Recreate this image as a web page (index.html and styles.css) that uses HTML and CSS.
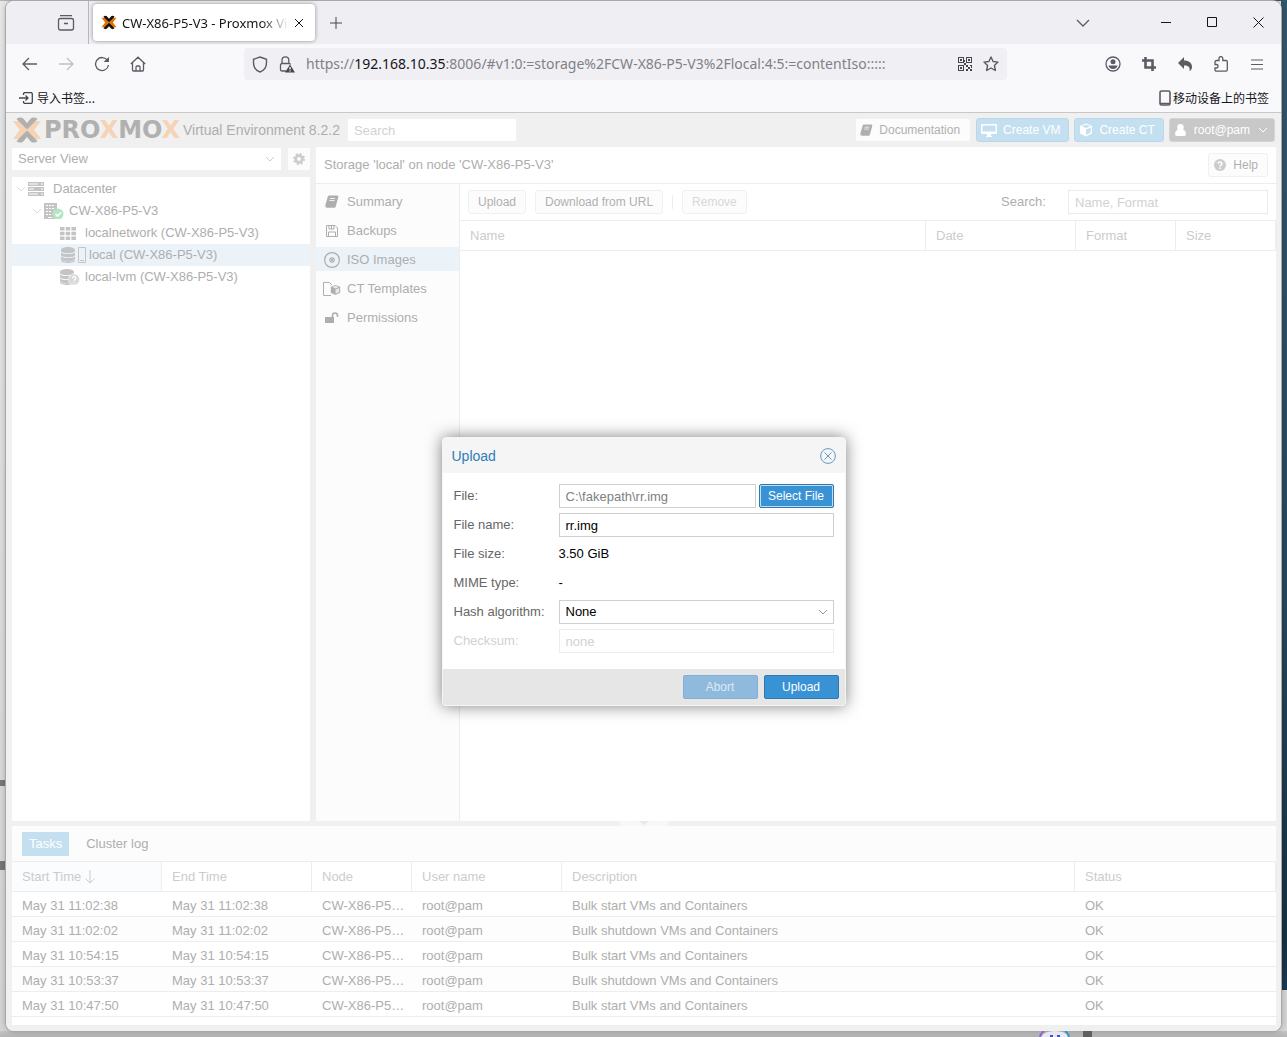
FILE: index.html
```
<!DOCTYPE html>
<html lang="en">

<head>
    <meta charset="UTF-8">
    <meta name="viewport" content="width=device-width, initial-scale=1.0">
    <title>CW-X86-P5-V3 - Proxmox Virtual Environment</title>
    <link rel="stylesheet" href="styles.css">
</head>

<body>
    <svg class="defs" width="0" height="0">
        <symbol id="mark" viewBox="0 0 30 26">
            <path class="mark-side" d="M1 4h6c1 0 2 .5 2.600 1.200L15.500 13l-5.900 7.800C9 21.500 8 22 7 22H1l6.800-9zM29 4h-6c-1 0-2 .5-2.600 1.200L14.500 13l5.900 7.800C21 21.500 22 22 23 22h6l-6.800-9z" />
            <path class="mark-top" d="M4.500 2C5.500 1 7 .500 8.500.500c1.300 0 2.300.5 3.200 1.500L15 6l3.300-4c.9-1 1.900-1.500 3.200-1.500 1.500 0 3 .5 4 1.500L15 12.500zM4.500 24c1 1 2.500 1.500 4 1.500 1.300 0 2.300-.5 3.200-1.500L15 20l3.300 4c.9 1 1.900 1.500 3.200 1.500 1.500 0 3-.5 4-1.500L15 13.500z" />
        </symbol>
        <symbol id="chevron" viewBox="0 0 10 6">
            <path d="M1 1l4 4 4-4" fill="none" stroke="currentColor" />
        </symbol>
        <symbol id="book" viewBox="0 0 14 13">
            <path d="M4.200.5h8.300q1 0 .8 1l-2.300 9q-.3 1-1.300 1H2.500q-.8 0-.8-.7.100-.5.800-.5h6.800q.7 0 .9-.8L12.300 2l.9.500-2.500 9q-.3 1.300-1.500 1.300H2Q0 12.800.3 10.500L2.800 1.600Q3.200.5 4.200.5z" fill="currentColor" />
            <path d="M5 3.500h5M4.500 5.500h5" stroke="#fff" stroke-width=".8" />
        </symbol>
        <symbol id="cube" viewBox="0 0 14 14">
            <path d="M7 .5l6 2.500v7.500l-6 3-6-3V3z" fill="currentColor" />
            <path d="M7 6.500v5.500l4.800-2.400V4.500zM7 1.700L2.700 3.300 7 5l4.300-1.700z" fill="var(--cut, #c4dff0)" />
        </symbol>
        <symbol id="disks" viewBox="0 0 14 16">
            <path d="M0 3c0-4 14-4 14 0v1c0 3-14 3-14 0zM0 5.500c2 2 12 2 14 0V8c0 3-14 3-14 0zM0 9.500c2 2 12 2 14 0V12c0 3-14 3-14 0zM0 13c2 2 12 2 14 0v.5c0 3.300-14 3.300-14 0z" fill="currentColor" />
        </symbol>
    </svg>

    <div class="window">
        <div class="tab-strip">
            <button class="history" aria-label="Firefox View">
                <svg width="18" height="16" viewBox="0 0 18 16" fill="none" stroke="currentColor" stroke-width="1.300">
                    <path d="M3 .7h12" />
                    <path d="M1.500 5.500q0-2 2-2h11q2 0 2 2v7.500q0 2-2 2h-11q-2 0-2-2zM7 8.500h4" />
                </svg>
            </button>
            <div class="tab">
                <svg class="favicon" width="16" height="15"><use href="#mark" /></svg>
                <span class="tab-title">CW-X86-P5-V3 - Proxmox Virtual Environment</span>
                <button aria-label="Close tab">
                    <svg width="10" height="10" stroke="currentColor"><path d="M1 1l8 8M9 1l-8 8" /></svg>
                </button>
            </div>
            <button class="new-tab" aria-label="New tab">
                <svg width="12" height="12" stroke="currentColor"><path d="M6 0v12M0 6h12" /></svg>
            </button>
            <div class="window-buttons">
                <button class="all-tabs" aria-label="List all tabs">
                    <svg width="14" height="8" fill="none" stroke="currentColor" stroke-width="1.300"><path d="M1 1l6 6 6-6" /></svg>
                </button>
                <button aria-label="Minimize">
                    <svg width="11" height="11" stroke="currentColor"><path d="M0 5.500h10" /></svg>
                </button>
                <button aria-label="Maximize">
                    <svg width="11" height="11" fill="none" stroke="currentColor"><path d="M.5.5h9v9h-9z" /></svg>
                </button>
                <button aria-label="Close">
                    <svg width="11" height="11" stroke="currentColor"><path d="M.5.5l10 10M10.500.5l-10 10" /></svg>
                </button>
            </div>
        </div>

        <div class="nav-bar">
            <div class="nav-group">
                <button aria-label="Back">
                    <svg width="16" height="14" fill="none" stroke="currentColor" stroke-width="1.300"><path d="M15 7H1.500M7 1L1 7l6 6" /></svg>
                </button>
                <button aria-label="Forward" disabled>
                    <svg width="16" height="14" fill="none" stroke="currentColor" stroke-width="1.300"><path d="M1 7h13.500M9 1l6 6-6 6" /></svg>
                </button>
                <button aria-label="Reload">
                    <svg width="16" height="16" fill="none" stroke="currentColor" stroke-width="1.300"><path d="M13.600 4.600A6.500 6.500 0 1 0 14.500 9" /><path d="M15 1v5H9.500z" fill="currentColor" stroke="none" /></svg>
                </button>
                <button aria-label="Home">
                    <svg width="16" height="16" fill="none" stroke="currentColor" stroke-width="1.300"><path d="M.8 8L8 1.200 15.200 8M2.500 6.500V14q0 1 1 1h9q1 0 1-1V6.500M6 15v-4q0-1 1-1h2q1 0 1 1v4" /></svg>
                </button>
            </div>
            <div class="url-bar">
                <svg width="16" height="17" fill="none" stroke="#5b5b66" stroke-width="1.400"><path d="M8 1l6.500 2.300v3.200C14.500 11 12 14.500 8 16 4 14.500 1.500 11 1.500 6.500V3.300z" /></svg>
                <svg width="16" height="17" viewBox="0 0 16 17" fill="none" stroke="#5b5b66" stroke-width="1.300">
                    <path d="M7 15H3q-1.500 0-1.500-1.500V9Q1.500 7.500 3 7.500h7q1.500 0 1.500 1M3 7.500V4.200a3.300 3.300 0 0 1 6.800 0v3.300" />
                    <path d="M11 8.500l5 8H6z" fill="#45454f" stroke="none" />
                    <path d="M11 11v2.500M11 14.500v1" stroke="#fff" />
                </svg>
                <span class="url">https://<b>192.168.10.35</b>:8006/#v1:0:=storage%2FCW-X86-P5-V3%2Flocal:4:5:=contentIso:::::</span>
                <svg width="14" height="14" viewBox="0 0 14 14" fill="#45454f">
                    <path fill-rule="evenodd" d="M0 0h6v6H0zM1 1v4h4V1zM8 0h6v6H8zM9 1v4h4V1zM0 8h6v6H0zM1 9v4h4V9zM2 2h2v2H2zM10 2h2v2h-2zM2 10h2v2H2zM8 8h2v2H8zM12 8h2v1h-2zM10 10h2v2h-2zM8 12h2v2H8zM12 12h2v2h-2zM13 9h1v2h-1zM6 6h2v2H6zM6 3h1v2H6z" />
                </svg>
                <svg width="16" height="16" viewBox="0 0 16 16" fill="none" stroke="#5b5b66" stroke-width="1.400" stroke-linejoin="round"><path d="M8 1l2.100 4.500 4.900.6-3.600 3.400 1 5L8 12l-4.400 2.500 1-5L1 6.100l4.900-.6z" /></svg>
            </div>
            <div class="nav-group tools">
                <button aria-label="Account">
                    <svg width="16" height="16" viewBox="0 0 16 16"><circle cx="8" cy="8" r="7" fill="none" stroke="currentColor" stroke-width="1.300" /><circle cx="8" cy="5.700" r="2.500" fill="currentColor" /><path d="M3.500 9.500h9Q11.500 13 8 13t-4.500-3.500z" fill="currentColor" /></svg>
                </button>
                <button aria-label="Screenshot">
                    <svg width="14" height="14" fill="none" stroke="currentColor" stroke-width="2.600"><path d="M3.500 0v10.500H14M0 3.500h10.500V14" /></svg>
                </button>
                <button aria-label="Undo">
                    <svg width="14" height="14" fill="currentColor"><path d="M6 0v3.500c5 0 8 2.500 8 6.500 0 2-1 3.500-2.500 4 .8-4-1-5.500-5.500-5.500V12L0 6z" /></svg>
                </button>
                <button aria-label="Extensions">
                    <svg width="14" height="16" fill="none" stroke="currentColor" stroke-width="1.300"><path d="M1 6q0-1.500 1.500-1.500H5v-2a1.800 1.800 0 0 1 3.800 0v2H12q1.300 0 1.300 1.300v8q0 1.300-1.300 1.300H2.300Q1 15.100 1 13.800V12h1.700a1.800 1.800 0 0 0 0-3.500H1z" /></svg>
                </button>
                <button aria-label="Menu">
                    <svg width="12" height="11" stroke="currentColor" stroke-width="1.200"><path d="M0 1h12M0 5.500h12M0 10h12" /></svg>
                </button>
            </div>
        </div>

        <div class="bookmarks" lang="zh-CN">
            <a href="#import">
                <svg width="14" height="12" viewBox="0 0 14 12" fill="none" stroke="#45454f" stroke-width="1.300"><path d="M4.500 3V2q0-1.400 1.400-1.400h6q1.400 0 1.400 1.400v8q0 1.400-1.400 1.400h-6Q4.500 11.400 4.500 10V9M0 6h9M6.500 3.500L9 6 6.500 8.500" /></svg>
                导入书签...
            </a>
            <a href="#mobile">
                <svg width="12" height="16" fill="none" stroke="#5b5b66" stroke-width="1.600"><rect x="1" y="1" width="10" height="14" rx="1.500" /><path d="M1 13.500h10" /></svg>
                移动设备上的书签
            </a>
        </div>

        <div class="app">
            <header class="app-header">
                <svg class="logo-mark" width="30" height="26"><use href="#mark" /></svg>
                <span class="logo-text">PRO<i>X</i>MO<i>X</i></span>
                <span class="version">Virtual Environment 8.2.2</span>
                <input class="global-search" type="text" placeholder="Search" aria-label="Search">
                <div class="header-buttons">
                    <button class="btn plain"><svg width="13" height="12"><use href="#book" /></svg>Documentation</button>
                    <button class="btn create">
                        <svg width="16" height="13" viewBox="0 0 16 13"><path fill-rule="evenodd" d="M1 0h14q1 0 1 1v8q0 1-1 1h-5v2h1v1H5v-1h1v-2H1q-1 0-1-1V1q0-1 1-1zM1.500 1.500v6h13v-6z" fill="currentColor" /></svg>Create VM
                    </button>
                    <button class="btn create"><svg width="14" height="14"><use href="#cube" /></svg>Create CT</button>
                    <button class="btn user">
                        <svg width="11" height="12" viewBox="0 0 11 12" fill="currentColor"><circle cx="5.500" cy="3.200" r="3.200" /><path d="M2.500 5.500h6Q11 7 11 10q0 2-2 2H2q-2 0-2-2 0-3 2.500-4.500z" /></svg>root@pam
                        <svg class="arrow" width="10" height="6"><use href="#chevron" /></svg>
                    </button>
                </div>
            </header>

            <div class="workspace">
                <aside class="sidebar">
                    <div class="view-row">
                        <div class="combo">
                            <select aria-label="View">
                                <option>Server View</option>
                                <option>Folder View</option>
                            </select>
                            <svg class="arrow" width="10" height="6"><use href="#chevron" /></svg>
                        </div>
                        <button class="gear" aria-label="Settings">
                            <svg width="12" height="12" viewBox="0 0 12 12"><circle cx="6" cy="6" r="3.300" fill="none" stroke="currentColor" stroke-width="2.800" /><circle cx="6" cy="6" r="5" fill="none" stroke="currentColor" stroke-width="2" stroke-dasharray="2 1.930" /></svg>
                        </button>
                    </div>
                    <ul class="tree">
                        <li>
                            <svg class="arrow" width="10" height="6"><use href="#chevron" /></svg>
                            <svg width="16" height="14" viewBox="0 0 16 14"><path fill-rule="evenodd" d="M0 0h16v4H0zM0 5h16v4H0zM0 10h16v4H0zM1 1.500v1h9v-1zM1 6.500v1h5v-1zM1 11.500v1h9v-1zM13 1.500v1h2v-1zM13 6.500v1h2v-1zM13 11.500v1h2v-1z" fill="currentColor" /></svg>
                            <span class="wide">Datacenter</span>
                        </li>
                        <li class="node">
                            <svg class="arrow" width="10" height="6"><use href="#chevron" /></svg>
                            <svg width="20" height="16" viewBox="0 0 20 16"><path fill-rule="evenodd" d="M0 0h13v16H0zM2 2v1h2V2zM5 2v1h2V2zM8 2v1h2V2zM2 5v1h2V5zM5 5v1h2V5zM8 5v1h2V5zM2 8v1h2V8zM5 8v1h2V8zM2 11v1h2v-1zM5 11v1h2v-1zM4 14v1h4v-1z" fill="currentColor" /><circle cx="14" cy="11" r="5.500" fill="#b5e6c4" /><path d="M11.500 11l2 2 3.500-3.500" fill="none" stroke="#fff" stroke-width="1.600" /></svg>
                            <span>CW-X86-P5-V3</span>
                        </li>
                        <li class="leaf">
                            <svg width="16" height="13" viewBox="0 0 16 13" fill="currentColor"><path d="M0 0h4.500v3.500H0zM5.700 0h4.500v3.500H5.700zM11.400 0H16v3.500h-4.600zM0 4.700h4.500v3.500H0zM5.700 4.700h4.500v3.500H5.700zM11.400 4.700H16v3.500h-4.600zM0 9.400h4.500V13H0zM5.700 9.400h4.500V13H5.700zM11.400 9.400H16V13h-4.600z" /></svg>
                            <span>localnetwork (CW-X86-P5-V3)</span>
                        </li>
                        <li class="leaf selected">
                            <svg width="26" height="16" viewBox="0 0 26 16"><use href="#disks" x="1" width="14" height="16" /><path d="M18.500.5h7v15h-7zM20 13.500h4" fill="none" stroke="currentColor" /></svg>
                            <span>local (CW-X86-P5-V3)</span>
                        </li>
                        <li class="leaf">
                            <svg width="20" height="16" viewBox="0 0 20 16"><use href="#disks" width="14" height="16" /><circle cx="14" cy="10.500" r="5.500" fill="#d8d8d8" stroke="#fff" stroke-width=".6" /><path d="M12.300 9.200c0-2.300 3.500-2 3.500 0 0 1.300-1.700 1.200-1.700 2.500M14.100 12.800v1.200" fill="none" stroke="#fff" stroke-width="1.200" /></svg>
                            <span>local-lvm (CW-X86-P5-V3)</span>
                        </li>
                    </ul>
                </aside>

                <main class="content">
                    <div class="content-title">
                        <span>Storage 'local' on node 'CW-X86-P5-V3'</span>
                        <button class="btn">
                            <svg width="12" height="12" viewBox="0 0 12 12"><circle cx="6" cy="6" r="6" fill="currentColor" /><path d="M4.200 4.800c0-2.500 3.700-2.200 3.700 0C7.900 6.200 6 6.200 6 7.500M6 8.500V10" fill="none" stroke="#fff" stroke-width="1.500" /></svg>Help
                        </button>
                    </div>
                    <nav class="menu">
                        <a href="#summary"><svg width="14" height="13"><use href="#book" /></svg>Summary</a>
                        <a href="#backups"><svg width="12" height="12" viewBox="0 0 12 12" fill="none" stroke="currentColor"><path d="M.5.5H9L11.500 3v8.500H.5zM3 .500V4h5V.500M2.500 11.500V7h7v4.500M5.500 1v3" /></svg>Backups</a>
                        <a href="#iso" class="selected"><svg width="16" height="16" fill="none" stroke="currentColor" stroke-width="1.200"><circle cx="8" cy="8" r="7.400" /><circle cx="8" cy="8" r="2.200" /><circle cx="8" cy="8" r=".5" /></svg>ISO Images</a>
                        <a href="#ct"><svg class="template" width="18" height="14" viewBox="0 0 18 14"><path d="M8 13.500H.5V.5h6L9 3" fill="none" stroke="currentColor" /><use href="#cube" x="7" y="2" width="11" height="12" /></svg>CT Templates</a>
                        <a href="#permissions"><svg width="14" height="12" viewBox="0 0 14 12"><path d="M0 5h9v6H0z" fill="currentColor" /><path d="M7.500 5.500V3.500a2.500 2.500 0 0 1 5 0V5" fill="none" stroke="currentColor" stroke-width="1.600" /></svg>Permissions</a>
                    </nav>
                    <section class="images">
                        <div class="toolbar">
                            <button class="btn">Upload</button>
                            <button class="btn">Download from URL</button>
                            <span class="separator"></span>
                            <button class="btn" disabled>Remove</button>
                            <label for="filter">Search:</label>
                            <input id="filter" type="text" placeholder="Name, Format">
                        </div>
                        <table class="image-table">
                            <thead>
                                <tr>
                                    <th>Name</th>
                                    <th class="date">Date</th>
                                    <th class="format">Format</th>
                                    <th class="size">Size</th>
                                </tr>
                            </thead>
                        </table>
                    </section>
                </main>
            </div>

            <div class="splitter">
                <span><svg width="10" height="4" fill="#e8e8e8"><path d="M0 0h10L5 4z" /></svg></span>
            </div>

            <section class="log">
                <div class="log-tabs">
                    <button class="active">Tasks</button>
                    <button>Cluster log</button>
                </div>
                <table class="log-table">
                    <thead>
                        <tr>
                            <th class="time sorted">Start Time <svg width="10" height="14" fill="none" stroke="currentColor"><path d="M5 0v13M.5 8.500L5 13l4.500-4.500" /></svg></th>
                            <th class="time">End Time</th>
                            <th class="node-col">Node</th>
                            <th class="time">User name</th>
                            <th>Description</th>
                            <th class="status">Status</th>
                        </tr>
                    </thead>
                    <tbody>
                        <tr>
                            <td>May 31 11:02:38</td>
                            <td>May 31 11:02:38</td>
                            <td>CW-X86-P5-V3</td>
                            <td>root@pam</td>
                            <td>Bulk start VMs and Containers</td>
                            <td>OK</td>
                        </tr>
                        <tr>
                            <td>May 31 11:02:02</td>
                            <td>May 31 11:02:02</td>
                            <td>CW-X86-P5-V3</td>
                            <td>root@pam</td>
                            <td>Bulk shutdown VMs and Containers</td>
                            <td>OK</td>
                        </tr>
                        <tr>
                            <td>May 31 10:54:15</td>
                            <td>May 31 10:54:15</td>
                            <td>CW-X86-P5-V3</td>
                            <td>root@pam</td>
                            <td>Bulk start VMs and Containers</td>
                            <td>OK</td>
                        </tr>
                        <tr>
                            <td>May 31 10:53:37</td>
                            <td>May 31 10:53:37</td>
                            <td>CW-X86-P5-V3</td>
                            <td>root@pam</td>
                            <td>Bulk shutdown VMs and Containers</td>
                            <td>OK</td>
                        </tr>
                        <tr>
                            <td>May 31 10:47:50</td>
                            <td>May 31 10:47:50</td>
                            <td>CW-X86-P5-V3</td>
                            <td>root@pam</td>
                            <td>Bulk start VMs and Containers</td>
                            <td>OK</td>
                        </tr>
                    </tbody>
                </table>
            </section>

            <form class="dialog" role="dialog" aria-labelledby="dialog-title">
                <div class="dialog-title">
                    <span id="dialog-title">Upload</span>
                    <button type="button" aria-label="Close dialog">
                        <svg width="16" height="16" fill="none" stroke="currentColor"><circle cx="8" cy="8" r="7.400" /><path d="M4.500 4.500l7 7M11.500 4.500l-7 7" /></svg>
                    </button>
                </div>
                <div class="fields">
                    <label for="file">File:</label>
                    <div class="file-row">
                        <input id="file" class="path" type="text" value="C:\fakepath\rr.img" readonly>
                        <button type="button" class="action focused">Select File</button>
                    </div>
                    <label for="file-name">File name:</label>
                    <input id="file-name" type="text" value="rr.img">
                    <span>File size:</span>
                    <span class="value">3.50 GiB</span>
                    <span>MIME type:</span>
                    <span class="value">-</span>
                    <label for="hash">Hash algorithm:</label>
                    <div class="combo">
                        <select id="hash">
                            <option>None</option>
                            <option>MD5</option>
                            <option>SHA-256</option>
                        </select>
                        <svg class="arrow" width="10" height="6"><use href="#chevron" /></svg>
                    </div>
                    <label class="off" for="checksum">Checksum:</label>
                    <input id="checksum" type="text" placeholder="none" disabled>
                </div>
                <div class="dialog-buttons">
                    <button type="button" class="action" disabled>Abort</button>
                    <button type="button" class="action">Upload</button>
                </div>
            </form>
        </div>
    </div>

    <!-- taskbar icon peeking out below the window -->
    <svg class="peek" width="70" height="6" viewBox="0 0 70 6">
        <path d="M12 6Q15 0 26 0T40 6" fill="#e6e9f3" />
        <path d="M11 6q1-4 4-6" fill="none" stroke="#8a6bc4" stroke-width="2" />
        <path d="M36 0q3 2 4 6" fill="none" stroke="#3598b8" stroke-width="2" />
        <path d="M21 4h3v2h-3zM28 4h3v2h-3z" fill="#3f51c0" />
        <path d="M54 0h9v6h-9z" fill="#606060" />
    </svg>
</body>

</html>
```
FILE: styles.css
```
* {
    box-sizing: border-box;
}

body {
    margin: 0;
    height: 100vh;
    min-height: 720px;
    padding: 1px 6px 6px;
    display: flex;
    font: 13px/20px "Liberation Sans", Arial, sans-serif;
    color: #aeaeae;
    /* desktop behind the window */
    background:
        linear-gradient(#777, #777) 0 780px / 6px 6px no-repeat,
        linear-gradient(#777, #777) 0 861px / 6px 9px no-repeat,
        linear-gradient(#34566a, #25475b 60%, #17303f 95%, #1c3a50) 100% 0 / 6px 990px no-repeat,
        linear-gradient(90deg, #b4b4b6 1100px, #34566a 1100px) 0 0 / 100% 1px no-repeat,
        linear-gradient(#c4c4c4, #b4b4b4) 0 100% / 100% 6px no-repeat,
        linear-gradient(#e8e8e8, #d4d4d4);
}

button,
input,
select {
    font: inherit;
    color: inherit;
    margin: 0;
}

button {
    padding: 0;
    border: none;
    background: none;
    display: flex;
    align-items: center;
    justify-content: center;
    white-space: nowrap;
}

svg {
    flex: none;
}

a {
    color: inherit;
    text-decoration: none;
}

.defs,
.peek {
    position: absolute;
}

.peek {
    right: 188px;
    bottom: 0;
}

.window {
    flex: 1;
    min-width: 0;
    display: flex;
    flex-direction: column;
    border-radius: 8px;
    overflow: hidden;
    background: #f9f9fb;
    box-shadow: 0 0 0 1px #a8a8aa, 0 0 6px rgba(0, 0, 0, 0.3);
}

/* browser chrome */

.tab-strip {
    height: 43px;
    flex: none;
    display: flex;
    align-items: center;
    background: #efeef3;
    color: #15141a;
}

.history {
    width: 83px;
    height: 43px;
    padding-left: 37px;
    border-right: 1px solid #b8b7bd;
    color: #5b5b66;
}

.tab {
    width: 222px;
    height: 37px;
    margin-left: 4px;
    padding: 0 11px 0 8px;
    display: flex;
    align-items: center;
    gap: 5px;
    border-radius: 4px;
    background: #fff;
    box-shadow: 0 0 4px rgba(0, 0, 0, 0.4);
    font: 13px/20px "Noto Sans", "Open Sans", sans-serif;
}

.tab-title {
    flex: 1;
    overflow: hidden;
    white-space: nowrap;
    -webkit-mask-image: linear-gradient(270deg, transparent, #000 28px);
    mask-image: linear-gradient(270deg, transparent, #000 28px);
}

.favicon {
    --side: #e57000;
    --top: #111;
}

.new-tab {
    width: 42px;
    height: 36px;
    color: #45454f;
}

.window-buttons {
    margin-left: auto;
    display: flex;
}

.window-buttons button {
    width: 46px;
    height: 36px;
}

.window-buttons .all-tabs {
    margin-right: 37px;
    color: #5b5b66;
}

.nav-bar {
    height: 40px;
    flex: none;
    padding: 0 6px;
    display: flex;
    align-items: center;
    color: #5b5b66;
}

.nav-group {
    flex: 1 0 232px;
    display: flex;
}

.nav-group button {
    width: 36px;
    height: 32px;
}

.nav-group button:disabled {
    color: #bfbfc5;
}

.tools {
    flex-basis: 268px;
    justify-content: flex-end;
}

.url-bar {
    flex: 0 1 763px;
    min-width: 0;
    height: 32px;
    padding: 0 8px;
    display: flex;
    align-items: center;
    gap: 11px;
    border-radius: 4px;
    background: #f0f0f4;
    font: 14px/20px "Noto Sans", "Open Sans", sans-serif;
    color: #808087;
}

.url {
    flex: 1;
    overflow: hidden;
    white-space: nowrap;
}

.url b {
    font-weight: normal;
    color: #15141a;
}

.bookmarks {
    height: 29px;
    flex: none;
    padding: 0 12px 0 13px;
    display: flex;
    align-items: center;
    justify-content: space-between;
    border-bottom: 1px solid #c8c8ca;
    font: 12px/20px "Noto Sans CJK SC", sans-serif;
    color: #15141a;
}

.bookmarks a {
    display: flex;
    align-items: center;
    gap: 4px;
}

.bookmarks a:last-child {
    gap: 2px;
}

/* Proxmox page */

.app {
    flex: 1;
    min-height: 0;
    padding: 0 5px 6px 6px;
    display: flex;
    flex-direction: column;
    position: relative;
    background: #f0f0f0;
}

.app-header {
    height: 34px;
    flex: none;
    display: flex;
    align-items: center;
    white-space: nowrap;
}

.mark-side {
    fill: var(--side);
}

.mark-top {
    fill: var(--top);
}

.logo-mark {
    --side: #f6d3b4;
    --top: #b0b0b0;
}

.logo-text {
    width: 139px;
    margin-left: 2px;
    font: bold 24px/26px "DejaVu Sans", sans-serif;
    color: #b0b0b0;
}

.logo-text i {
    font-style: normal;
    color: #f6d3b4;
}

.version {
    width: 165px;
    font-size: 14px;
}

.global-search {
    width: 168px;
    height: 22px;
    padding: 0 6px;
    border: none;
    background: #fff;
}

::placeholder {
    color: #d2d2d2;
    opacity: 1;
}

.header-buttons {
    margin-left: auto;
    padding-right: 1px;
    display: flex;
    gap: 5px;
}

.btn {
    height: 24px;
    padding: 0 9px;
    gap: 6px;
    border: 1px solid #f0f0f0;
    border-radius: 3px;
    background: #fcfcfc;
    color: #b0b0b0;
    font-size: 12px;
}

.btn:disabled {
    color: #d8d8d8;
}

.header-buttons .btn {
    padding: 0 10px 0 4px;
}

.header-buttons .create {
    padding: 0 8px 0 4px;
    background: #c4dff0;
    border-color: #b9d8ec;
    color: #fff;
}

.header-buttons .user {
    padding: 0 6px 0 5px;
    gap: 8px;
    background: #c7c8c7;
    border-color: #d4d4d4;
    color: #fff;
}

.workspace {
    flex: 1;
    min-height: 0;
    display: flex;
    gap: 6px;
}

.sidebar {
    width: 298px;
    padding-top: 1px;
    display: flex;
    flex-direction: column;
    gap: 7px;
}

.view-row {
    display: flex;
    gap: 7px;
}

.combo {
    flex: 1;
    position: relative;
}

.combo select {
    display: block;
    width: 100%;
    height: 22px;
    padding: 0 6px;
    border: none;
    border-radius: 0;
    appearance: none;
    background: #fff;
}

.combo .arrow {
    position: absolute;
    right: 6px;
    top: 8px;
    color: #ccc;
    pointer-events: none;
}

.gear {
    width: 22px;
    height: 22px;
    background: #fcfcfc;
    color: #ccc;
}

.tree {
    flex: 1;
    margin: 0;
    padding: 1px 0 0;
    list-style: none;
    background: #fff;
}

.tree li {
    height: 22px;
    padding-left: 4px;
    display: flex;
    align-items: center;
    gap: 2px;
    white-space: nowrap;
}

.tree svg {
    color: #c4c4c4;
}

.tree .arrow {
    color: #ddd;
}

.tree .wide {
    margin-left: 7px;
}

.tree .node {
    padding-left: 20px;
}

.tree .node span {
    margin-left: 3px;
}

.tree .leaf {
    padding-left: 48px;
    gap: 3px;
}

.tree .leaf:nth-child(3) {
    gap: 9px;
}

.tree .leaf:last-child {
    gap: 5px;
}

.selected {
    background: #ebf3f9;
}

.content {
    flex: 1;
    min-width: 0;
    display: grid;
    grid-template: 37px 1fr / 144px 1fr;
    background: #fff;
}

.content-title {
    grid-column: 1 / 3;
    padding: 0 8px;
    display: flex;
    align-items: center;
    justify-content: space-between;
    border-bottom: 1px solid #ededed;
}

.content-title svg {
    color: #ccc;
}

.content-title .btn {
    padding: 0 9px 0 5px;
    gap: 7px;
}

.menu {
    padding-top: 5px;
    display: flex;
    flex-direction: column;
    gap: 5px;
    border-right: 1px solid #ededed;
    background: #fcfcfc;
}

.menu a {
    height: 24px;
    padding: 1px 0 0 7px;
    display: grid;
    grid-template-columns: 18px 1fr;
    gap: 6px;
    align-items: center;
}

.menu svg {
    justify-self: center;
    --cut: #e8e8e8;
}

.toolbar {
    height: 37px;
    padding: 0 8px;
    display: flex;
    align-items: center;
    gap: 9px;
    border-bottom: 1px solid #ededed;
}

.toolbar .separator {
    height: 14px;
    border-left: 1px solid #ededed;
}

.toolbar label {
    width: 58px;
    margin-left: auto;
}

.toolbar input {
    width: 200px;
    height: 24px;
    padding: 0 6px;
    border: 1px solid #ebebeb;
}

table {
    width: 100%;
    table-layout: fixed;
    border-collapse: separate;
    border-spacing: 0;
}

th {
    height: 30px;
    padding: 0 10px;
    border-bottom: 1px solid #ededed;
    border-right: 1px solid #ededed;
    font-weight: normal;
    text-align: left;
    color: #ccc;
}

.image-table .date {
    width: 150px;
}

.image-table .format {
    width: 100px;
}

.image-table .size {
    width: 100px;
}

.splitter {
    height: 5px;
    flex: none;
    display: flex;
    justify-content: center;
}

.splitter span {
    width: 48px;
    display: flex;
    justify-content: center;
    background: #f7f7f7;
}

.log {
    height: 199px;
    flex: none;
    background: #fff;
}

.log-tabs {
    height: 36px;
    padding: 0 10px;
    display: flex;
    align-items: center;
    gap: 10px;
    border-bottom: 1px solid #ededed;
    background: #fcfcfc;
}

.log-tabs button {
    height: 24px;
    padding: 1px 7px 0;
}

.log-tabs .active {
    background: #c4dff0;
    color: #fff;
}

.time {
    width: 150px;
}

.node-col {
    width: 100px;
}

.status {
    width: 201px;
}

.sorted {
    background: #fafcfe;
}

.sorted svg {
    vertical-align: middle;
}

td {
    height: 25px;
    padding: 4px 5px 0 10px;
    border-bottom: 1px solid #ededed;
    overflow: hidden;
    text-overflow: ellipsis;
    white-space: nowrap;
}

tr:nth-child(even) td {
    background: #fdfdfd;
}

/* upload dialog */

.dialog {
    position: absolute;
    left: 50%;
    top: 50%;
    margin: -135px 0 0 -202px;
    width: 404px;
    border: 1px solid #f5f5f5;
    border-radius: 4px;
    overflow: hidden;
    background: #fff;
    box-shadow: 0 0 16px rgba(0, 0, 0, 0.5);
    color: #666;
}

.dialog-title {
    height: 35px;
    padding: 0 9px;
    display: flex;
    align-items: center;
    justify-content: space-between;
    background: #f5f5f5;
    color: #2d7fb8;
    font-size: 14px;
}

.dialog-title button {
    color: #5f98c4;
}

.fields {
    padding: 11px 11px 16px;
    display: grid;
    grid-template-columns: 105px 1fr;
    grid-auto-rows: 24px;
    row-gap: 5px;
    align-items: center;
}

.fields input,
.fields select {
    width: 100%;
    min-width: 0;
    height: 24px;
    padding: 0 6px;
    border: 1px solid #cfcfcf;
    background: #fff;
    color: #000;
}

.fields .path {
    color: #808080;
}

.fields input:disabled {
    border-color: #ececec;
}

.fields .combo .arrow {
    top: 9px;
    color: #999;
}

.value {
    color: #000;
}

.off {
    color: #d1d1d1;
}

.file-row {
    display: flex;
    gap: 3px;
}

.action {
    width: 75px;
    height: 24px;
    flex: none;
    border: 1px solid #2a7ab3;
    border-radius: 2px;
    background: #3892d4;
    color: #fff;
    font-size: 12px;
}

.action.focused {
    box-shadow: inset 0 0 0 1px #c3def2;
}

.action:disabled {
    border-color: #80b0d5;
    background: #90badd;
    color: #dbe9f5;
}

.dialog-buttons {
    height: 36px;
    padding-right: 6px;
    display: flex;
    align-items: center;
    justify-content: flex-end;
    gap: 6px;
    background: #e6e6e6;
}
```
